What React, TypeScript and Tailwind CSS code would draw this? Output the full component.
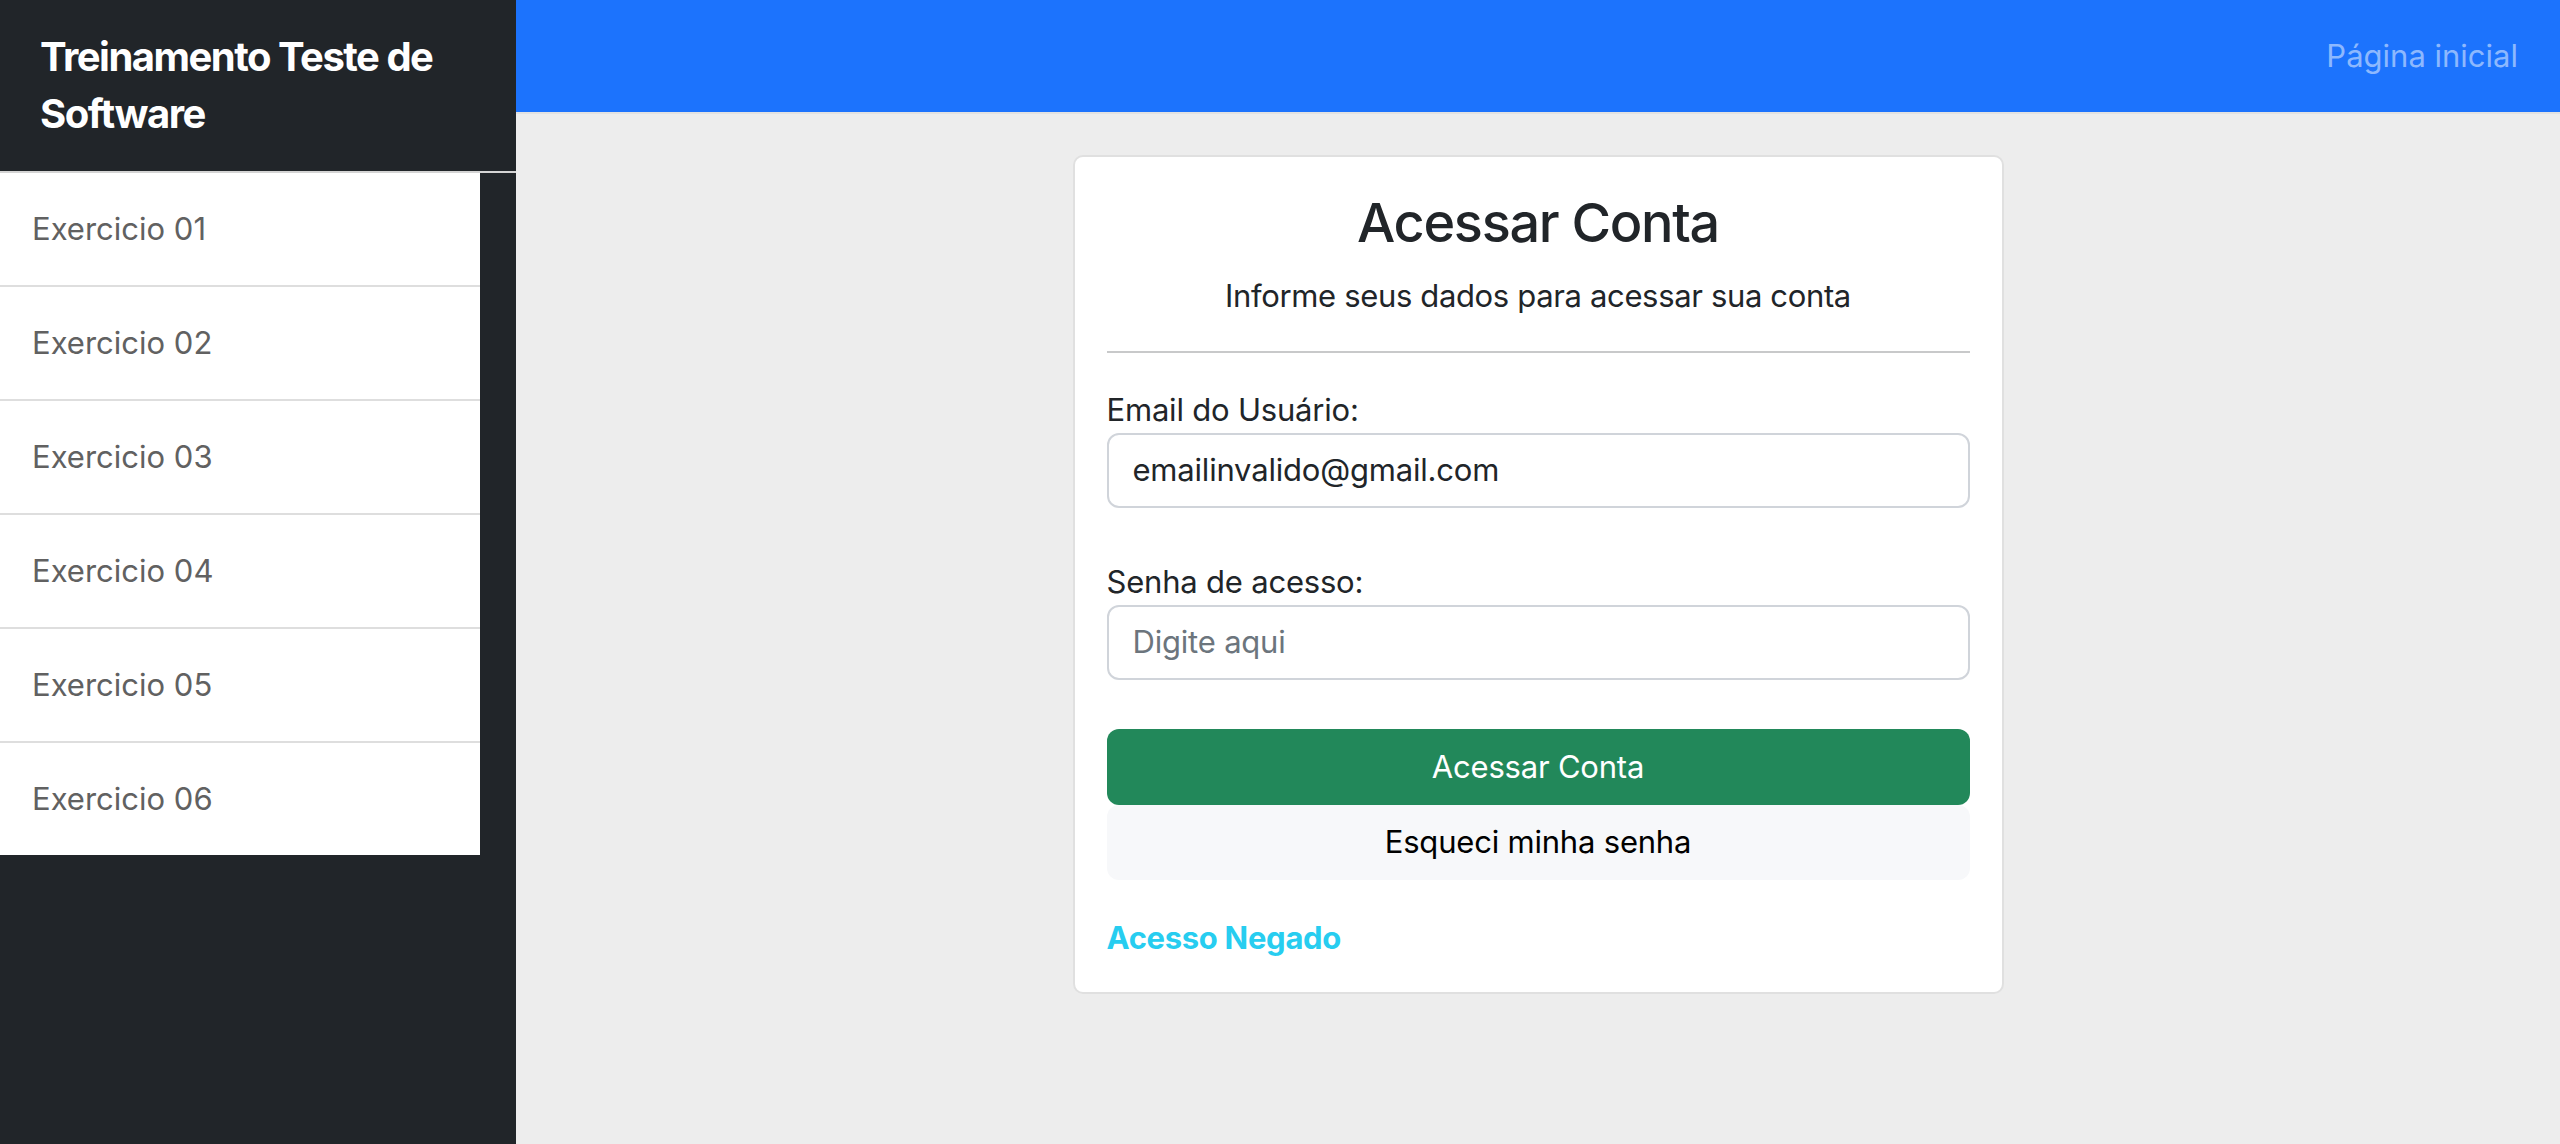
import React from "react";

const items = ["Exercicio 01", "Exercicio 02", "Exercicio 03", "Exercicio 04", "Exercicio 05", "Exercicio 06"];

export default function App() {
  return (
    <div className="flex min-h-[1144px] w-full font-[Inter,sans-serif] antialiased">
      <aside className="w-[516px] shrink-0 bg-[#212529] flex flex-col">
        <div className="h-[173px] border-b-2 border-[#d4d4d4] pl-10 pt-[28px]">
          <h1 className="text-[40px] leading-[57px] font-bold text-white tracking-[-1.5px]">
            Treinamento Teste de
            <br />
            Software
          </h1>
        </div>
        <ul className="w-[480px] bg-white">
          {items.map((t, i) => (
            <li
              key={t}
              className={
                i < items.length - 1
                  ? "h-[114px] border-b-2 border-[#dedede] pl-8 flex items-center text-[31px] text-[#616161]"
                  : "h-[112px] pl-8 flex items-center text-[31px] text-[#616161]"
              }
            >
              {t}
            </li>
          ))}
        </ul>
      </aside>
      <main className="flex-1 bg-[#ededed] flex flex-col">
        <header className="h-[114px] bg-[#1c73fd] border-b-2 border-[#e2e2e2] flex items-center justify-end pr-[42px]">
          <a className="text-[31px] text-[#8db8fe]">Página inicial</a>
        </header>
        <div className="flex justify-center pt-[41px]">
          <div className="w-[931px] bg-white border-2 border-[#e0e0e0] rounded-[10px] px-8 pt-8 pb-[30px] text-[#212529]">
            <h2 className="text-[54px] leading-[67px] font-medium text-center tracking-[-1.3px]">Acessar Conta</h2>
            <p className="mt-4 text-[31px] leading-[48px] text-center tracking-[-0.35px]">Informe seus dados para acessar sua conta</p>
            <div className="mt-[31px] h-[2px] bg-[#c8c9ca]" />
            <label className="block mt-[33px] text-[31px] leading-[47px] tracking-[-0.2px]">Email do Usuário:</label>
            <div className="h-[75px] border-2 border-[#d0d4da] rounded-[12px] px-6 flex items-center text-[31px] tracking-[-0.2px]">
              emailinvalido@gmail.com
            </div>
            <label className="block mt-[50px] text-[31px] leading-[47px] tracking-[-0.2px]">Senha de acesso:</label>
            <div className="h-[75px] border-2 border-[#d0d4da] rounded-[12px] px-6 flex items-center text-[31px] text-[#6c757d] tracking-[-0.2px]">
              Digite aqui
            </div>
            <button className="mt-[49px] w-full h-[76px] bg-[#22885a] rounded-[12px] text-white text-[31px] tracking-[-0.2px]">
              Acessar Conta
            </button>
            <button className="w-full h-[75px] bg-[#f7f8fa] rounded-[12px] text-black text-[31px] tracking-[-0.2px]">
              Esqueci minha senha
            </button>
            <a className="block mt-[34px] text-[31px] leading-[48px] font-bold text-[#27cdf0] tracking-[-0.3px]">Acesso Negado</a>
          </div>
        </div>
      </main>
    </div>
  );
}
